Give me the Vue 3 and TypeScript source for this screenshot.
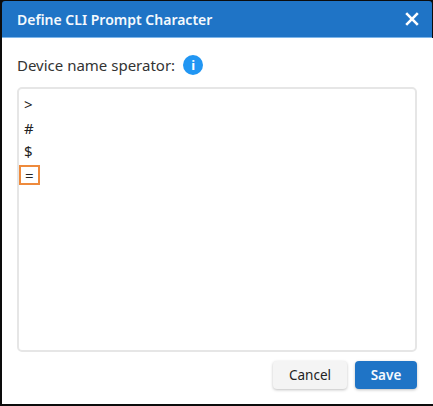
<script setup lang="ts">
const lines: string[] = ['>', '#', '$', '=']
</script>

<template>
  <div class="dialog">
    <header class="head">
      <span class="title">Define CLI Prompt Character</span>
      <svg class="close" width="14" height="14" viewBox="0 0 14 14" aria-label="Close">
        <path d="M1.2 1.2 L12.8 12.8 M12.8 1.2 L1.2 12.8" stroke="#fff" stroke-width="2.6" fill="none" />
      </svg>
    </header>
    <div class="body">
      <div class="label-row">
        <span class="label">Device name sperator:</span>
        <span class="info">i</span>
      </div>
      <div class="editor">
        <div v-for="(line, i) in lines" :key="i" class="line">
          <span :class="{ mark: i === lines.length - 1 }">{{ line }}</span>
        </div>
      </div>
      <div class="actions">
        <button class="btn cancel">Cancel</button>
        <button class="btn save">Save</button>
      </div>
    </div>
  </div>
</template>

<style>
html, body { margin: 0; background: #fff; }
</style>

<style scoped>
.dialog {
  box-sizing: border-box;
  width: 433px;
  height: 406px;
  display: flex;
  flex-direction: column;
  background: #0c0c0c;
  border-style: solid;
  border-color: #0c0c0c;
  border-width: 1px 0 2px 2px;
  font-family: "Noto Sans", "Open Sans", sans-serif;
}
.head {
  height: 37px;
  flex: none;
  box-sizing: border-box;
  display: flex;
  align-items: center;
  justify-content: space-between;
  margin-right: 1px;
  padding: 0 13px 0 15px;
  background: #1f74c6;
  border-bottom: 1px solid #7db6ea;
  border-radius: 3px 3px 0 0;
}
.title {
  color: #f4f9fd;
  font-size: 14px;
  font-weight: 600;
}
.body {
  flex: 1;
  min-height: 0;
  display: flex;
  flex-direction: column;
  padding: 15px 16px 15px 15px;
  background: #fff;
}
.label-row {
  display: flex;
  align-items: center;
  gap: 8px;
  height: 24px;
  margin-bottom: 10px;
}
.label {
  color: #333;
  font-size: 15px;
}
.info {
  width: 20px;
  height: 20px;
  border-radius: 50%;
  background: #2196f3;
  color: #fff;
  font-size: 13px;
  font-weight: 700;
  line-height: 20px;
  text-align: center;
}
.editor {
  flex: 1;
  min-height: 0;
  box-sizing: border-box;
  border: 2px solid #e6e6e6;
  border-radius: 5px;
  padding: 4px 0 3px;
}
.line {
  height: 23.7px;
  line-height: 23.7px;
  padding-left: 5px;
  color: #222;
  font-size: 15px;
}
.mark {
  display: inline-block;
  box-sizing: border-box;
  width: 21px;
  height: 20px;
  margin-left: -5px;
  padding-left: 4px;
  line-height: 16px;
  vertical-align: top;
  margin-top: 1px;
  border: 2px solid #ee8a3c;
}
.actions {
  display: flex;
  justify-content: flex-end;
  gap: 8px;
  margin-top: 9px;
}
.btn {
  height: 28px;
  border: none;
  border-radius: 4px;
  font-family: inherit;
  font-size: 13.5px;
  box-shadow: 0 1px 3px rgba(0, 0, 0, 0.25);
  padding: 0;
}
.cancel {
  width: 74px;
  background: #f4f4f4;
  color: #222;
}
.save {
  width: 62px;
  background: #1f74c6;
  color: #f4f9fd;
  font-weight: 600;
}
</style>
